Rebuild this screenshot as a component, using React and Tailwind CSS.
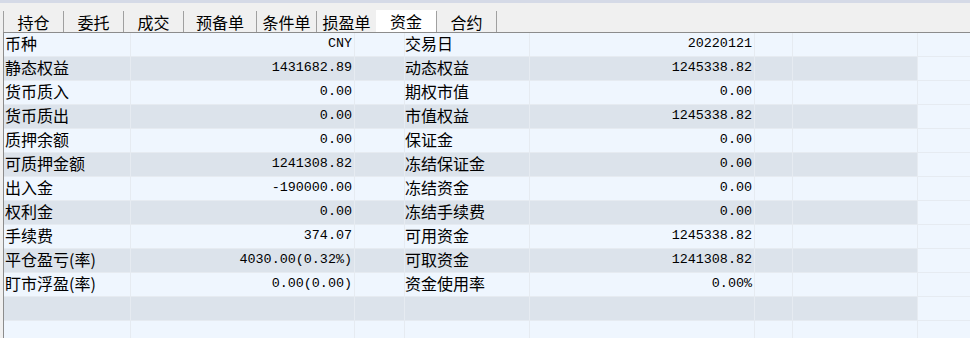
const tabs = [
  { label: '持仓', w: 'w-[60px]' },
  { label: '委托', w: 'w-[60px]' },
  { label: '成交', w: 'w-[60px]' },
  { label: '预备单', w: 'w-[73px]' },
  { label: '条件单', w: 'w-[60px]' },
  { label: '损盈单', w: 'w-[60px]' },
  { label: '资金', w: 'w-[60px]', active: true },
  { label: '合约', w: 'w-[61px]' },
];

const rows = [
  ['币种', 'CNY', '交易日', '20220121'],
  ['静态权益', '1431682.89', '动态权益', '1245338.82'],
  ['货币质入', '0.00', '期权市值', '0.00'],
  ['货币质出', '0.00', '市值权益', '1245338.82'],
  ['质押余额', '0.00', '保证金', '0.00'],
  ['可质押金额', '1241308.82', '冻结保证金', '0.00'],
  ['出入金', '-190000.00', '冻结资金', '0.00'],
  ['权利金', '0.00', '冻结手续费', '0.00'],
  ['手续费', '374.07', '可用资金', '1245338.82'],
  ['平仓盈亏(率)', '4030.00(0.32%)', '可取资金', '1241308.82'],
  ['盯市浮盈(率)', '0.00(0.00)', '资金使用率', '0.00%'],
  ['', '', '', ''],
  ['', '', '', ''],
];

const cjk = "font-['Noto_Sans_CJK_SC',sans-serif]";
const mono = "font-['Liberation_Mono','Noto_Sans_CJK_SC',monospace]";

export default function App() {
  return (
    <div className={`h-[338px] w-[970px] overflow-hidden bg-[#f0f0f0] text-black ${cjk}`}>
      <div className="h-[3px] bg-[#d5dae7]" />

      {/* tab strip */}
      <div className="flex h-[29px] items-end pl-[3px]">
        {tabs.map((t) =>
          t.active ? (
            <div
              key={t.label}
              className={`${t.w} flex h-[22px] items-center justify-center bg-white text-[16px] leading-none`}
            >
              {t.label}
            </div>
          ) : (
            <div
              key={t.label}
              className={`${t.w} flex h-[21px] items-center justify-center border-l border-[#a0a0a0] text-[16px] leading-none ${
                t.label === '合约' ? 'border-r' : ''
              }`}
            >
              {t.label}
            </div>
          )
        )}
      </div>

      {/* fund grid */}
      <div className="ml-[3px] border-l border-t border-[#8c8c8c]">
        {rows.map((r, i) => {
          const stripe = i % 2 === 1 ? 'bg-[#dce3eb]' : 'bg-[#eff6fe]';
          const cell = `h-[24px] border-b border-r border-[#e6ebf1] ${stripe}`;
          return (
            <div
              key={i}
              className="grid grid-cols-[127px_224px_50px_125px_225px_38px_125px_1fr] text-[16px] leading-[20px]"
            >
              <div className={`${cell} whitespace-nowrap pl-[1px]`}>{r[0]}</div>
              <div className={`${cell} pr-[2px] text-right ${mono} text-[13.4px] leading-[21px]`}>{r[1]}</div>
              <div className={cell} />
              <div className={`${cell} whitespace-nowrap`}>{r[2]}</div>
              <div className={`${cell} pr-[2px] text-right ${mono} text-[13.4px] leading-[21px]`}>{r[3]}</div>
              <div className={cell} />
              <div className={cell} />
              <div className="h-[24px] border-b border-[#e6ebf1] bg-[#eff6fe]" />
            </div>
          );
        })}
      </div>
    </div>
  );
}
